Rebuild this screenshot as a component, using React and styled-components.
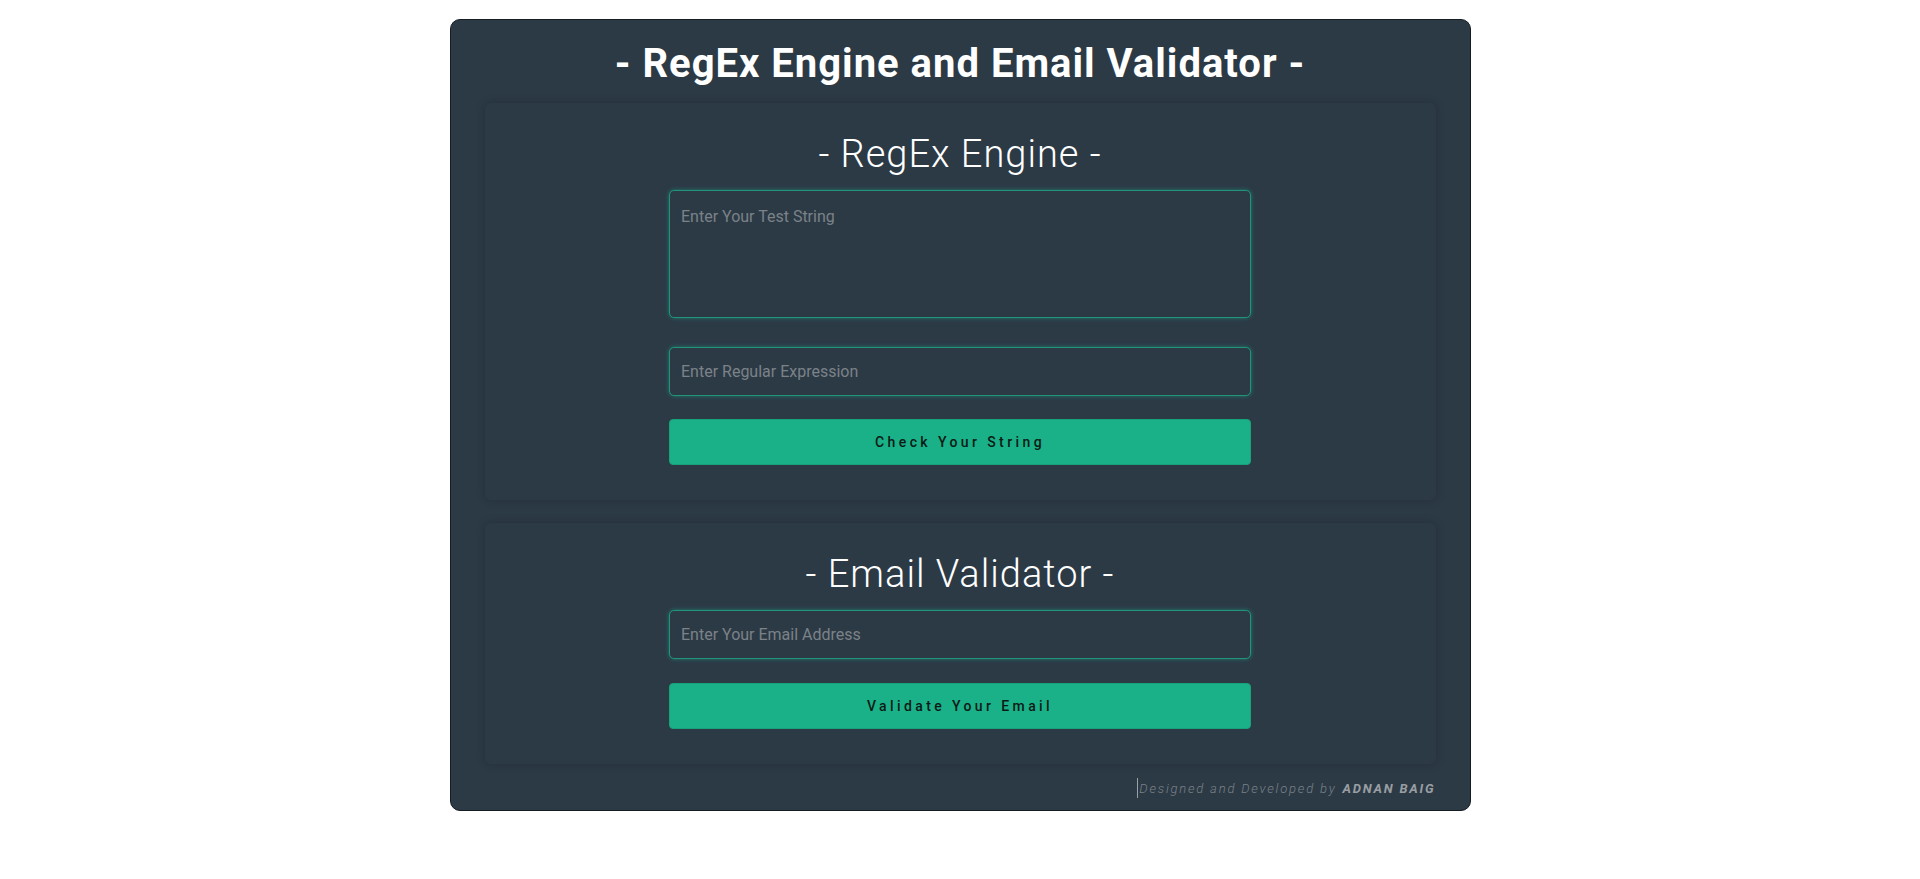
import styled, { createGlobalStyle } from "styled-components";

const GlobalStyle = createGlobalStyle`
  body {
    margin: 0;
    background: #ffffff;
    font-family: Roboto, "Noto Sans", sans-serif;
  }
  * {
    box-sizing: border-box;
  }
`;

const Page = styled.div`
  display: flex;
  justify-content: center;
  padding-top: 19px;
`;

const Wrapper = styled.main`
  width: 1021px;
  background: #2c3a46;
  border: 1px solid #161c22;
  border-radius: 10px;
  padding: 21px 34px 12px;
  display: flex;
  flex-direction: column;
  gap: 23px;
`;

const Title = styled.h1`
  margin: 0 0 -7px;
  color: #ffffff;
  font-size: 40px;
  font-weight: 700;
  letter-spacing: 1px;
  line-height: 46px;
  text-align: center;
`;

const Card = styled.section`
  background: #2c3a46;
  border-radius: 6px;
  box-shadow: 0 0 10px rgba(0, 0, 0, 0.18);
  padding: 29px 0 35px;
  display: flex;
  flex-direction: column;
  align-items: center;
`;

const Heading = styled.h2`
  margin: 0 0 14px;
  color: #ffffff;
  font-size: 38px;
  font-weight: 300;
  letter-spacing: 1px;
  line-height: 44px;
`;

const Field = styled.input`
  width: 582px;
  height: 49px;
  padding: 0 11px;
  background: #2c3a46;
  border: 1px solid #21947a;
  border-radius: 5px;
  box-shadow: 0 0 4px rgba(26, 177, 136, 0.55);
  color: #ffffff;
  font-family: Roboto, sans-serif;
  font-size: 16px;
  outline: none;
  margin-bottom: ${(p) => p.$gap || 23}px;

  &::placeholder {
    color: #7b8288;
  }
`;

const Area = styled(Field).attrs({ as: "textarea" })`
  height: 128px;
  padding: 17px 11px;
  resize: none;
  line-height: 18px;
`;

const Button = styled.button`
  width: 582px;
  height: 46px;
  border: 1px solid #17a27c;
  border-radius: 4px;
  background: #1ab188;
  color: #0b1a15;
  font-family: Roboto, sans-serif;
  font-size: 14px;
  font-weight: 500;
  letter-spacing: 3.4px;
  cursor: pointer;
`;

const Credit = styled.p`
  margin: -9px 0 0;
  align-self: flex-end;
  display: flex;
  align-items: center;
  color: #7a8187;
  font-size: 13px;
  font-style: italic;
  font-weight: 300;
  letter-spacing: 1.8px;
`;

const Caret = styled.span`
  width: 1px;
  height: 20px;
  margin-right: 1px;
  background: #9aa0a5;
`;

const Author = styled.b`
  margin-left: 6px;
  color: #999ea2;
  font-weight: 700;
`;

export default function App() {
  return (
    <>
      <GlobalStyle />
      <Page>
        <Wrapper>
          <Title>- RegEx Engine and Email Validator -</Title>

          <Card>
            <Heading>- RegEx Engine -</Heading>
            <Area placeholder="Enter Your Test String" $gap={29} />
            <Field placeholder="Enter Regular Expression" />
            <Button>Check Your String</Button>
          </Card>

          <Card>
            <Heading>- Email Validator -</Heading>
            <Field placeholder="Enter Your Email Address" $gap={24} />
            <Button>Validate Your Email</Button>
          </Card>

          <Credit>
            <Caret />
            Designed and Developed by <Author>ADNAN BAIG</Author>
          </Credit>
        </Wrapper>
      </Page>
    </>
  );
}
